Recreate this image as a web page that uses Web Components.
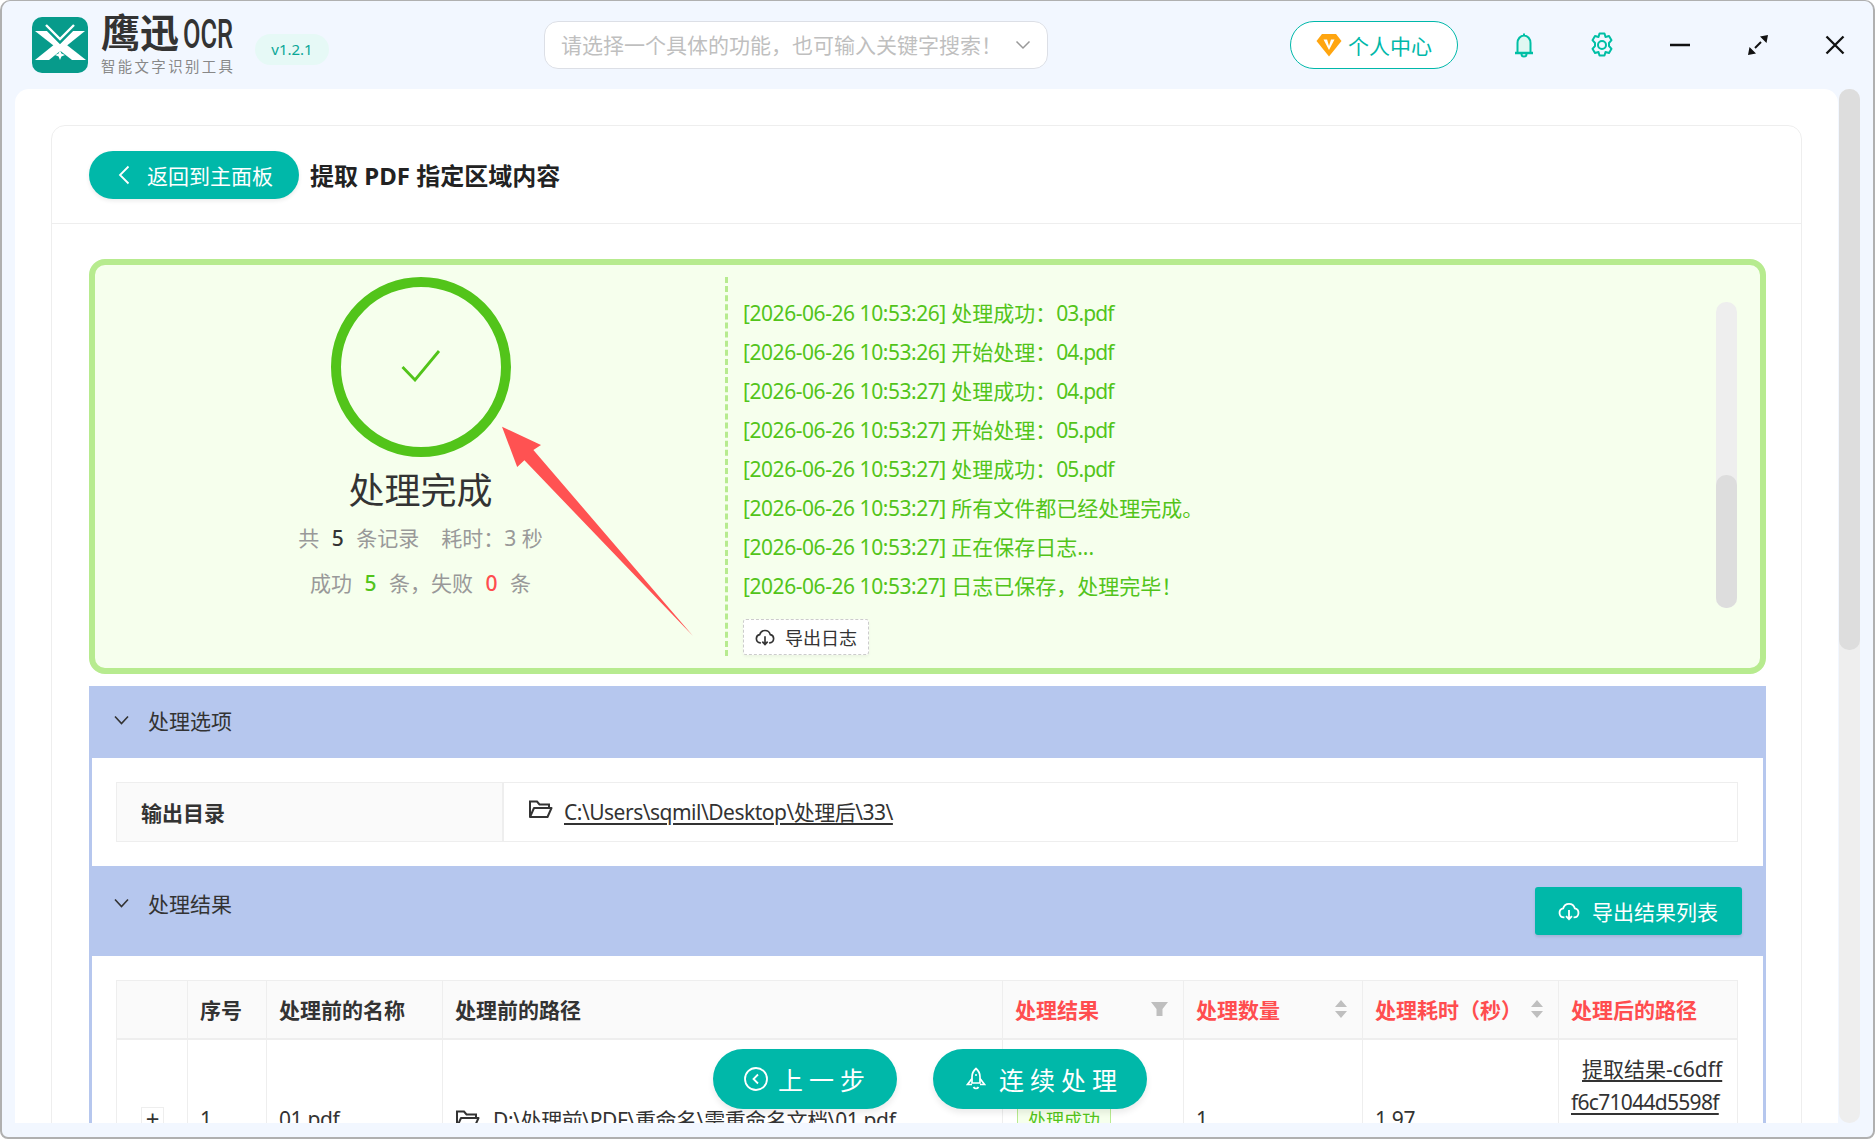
<!DOCTYPE html>
<html lang="zh-CN">
<head>
<meta charset="utf-8">
<title>鹰迅OCR</title>
<style>
    html, body { margin: 0; padding: 0; background: #fff; }
    body { font-family: "Noto Sans", "Noto Sans CJK SC", sans-serif; color: #333; overflow: hidden; }
    .tight { letter-spacing: -.45px; }
    .file { letter-spacing: -.9px; }
    .num { font-weight: 500; margin: 0 7px; }
</style>
</head>
<body>

<template id="app-window-template">
    <style>
        :host { display: block; position: relative; width: 1875px; height: 1139px; box-sizing: border-box; overflow: hidden;
            background: #f2f7ff; border: solid #b0b0b0; border-width: 1px 2px 2px 2px; border-radius: 10px 10px 8px 8px; }
        .body { display: flex; height: 1034px; padding-left: 13px; gap: 1px; }
        .panel { width: 1823px; background: #fff; border-radius: 14px 14px 0 0; overflow: hidden; box-sizing: border-box; padding: 36px 36px 0; }
        .track { width: 21px; background: #eee; border-radius: 10px; position: relative; }
        .thumb { height: 561px; background: #ddd; border-radius: 10px; }
    </style>
    <slot name="header"></slot>
    <div class="body">
        <div class="panel"><slot></slot></div>
        <div class="track"><div class="thumb"></div></div>
    </div>
    <slot name="float"></slot>
</template>

<template id="app-header-template">
    <style>
        :host { display: flex; align-items: center; height: 88px; }
        .logo { margin-left: 30px; width: 56px; height: 56px; display: block; }
        .brand { margin-left: 13px; width: 134px; font-family: "Liberation Sans", "Noto Sans CJK SC", sans-serif; }
        .name { display: flex; align-items: center; height: 38px; font-weight: 700; font-size: 39px; line-height: 38px; color: #333; white-space: nowrap; }
        .ocr { display: inline-block; font-family: "Roboto", sans-serif; font-size: 41px; line-height: 38px; font-weight: 500; transform: scaleX(.62); transform-origin: 0 50%; margin-left: 4px; }
        .sub { font-size: 14.4px; line-height: 18px; letter-spacing: 2.4px; color: #888; white-space: nowrap; margin-top: 5px; }
        .ver { margin-left: 20px; width: 74px; height: 31px; line-height: 31px; text-align: center; border-radius: 16px; background: #e6f9f6; color: #0aa796; font-size: 15px; margin-top: 9px; }
        .search { margin-left: 215px; width: 504px; height: 48px; box-sizing: border-box; border: 1px solid #dcdfe6; border-radius: 14px; background: #fff;
            display: flex; align-items: center; padding: 0 16px 0 16px; color: #bfbfbf; font-size: 21px; white-space: nowrap; margin-top: -1px; }
        .search span { flex: 1; margin-top: -2px; }
        .vip { margin-left: 242px; width: 168px; height: 48px; box-sizing: border-box; border: 1.5px solid #00b8a9; border-radius: 24px; background: #fff;
            display: flex; align-items: center; padding-left: 25px; gap: 6px; color: #00b8a9; font-size: 21px; white-space: nowrap; margin-top: -1px; }
        .ic { display: block; flex: none; }
    </style>
    <svg class="logo" viewBox="0 0 56 56">
        <rect width="56" height="56" rx="10" fill="#079b8b"/>
        <path d="M3 14h14l37 29H40z" fill="#fff"/>
        <path d="M53 14H39L3 43h14z" fill="#fff"/>
        <path d="M14 9l14 14L42 9" stroke="#079b8b" stroke-width="6" fill="none"/>
        <path d="M14 8l14 14L42 8" stroke="#fff" stroke-width="2.4" fill="none"/>
        <path d="M28 33l1.4 3.6L33 38l-3.6 1.4L28 43l-1.4-3.6L23 38l3.6-1.4z" fill="#fff"/>
    </svg>
    <div class="brand">
        <div class="name">鹰迅<span class="ocr">OCR</span></div>
        <div class="sub">智能文字识别工具</div>
    </div>
    <div class="ver">v1.2.1</div>
    <div class="search">
        <span>请选择一个具体的功能，也可输入关键字搜索！</span>
        <svg class="ic" width="16" height="10" viewBox="0 0 16 10"><path d="M1.5 1.5 8 8l6.5-6.5" stroke="#999" stroke-width="1.5" fill="none"/></svg>
    </div>
    <div class="vip">
        <svg class="ic" width="26" height="24" viewBox="0 0 26 24"><path d="M6 1h14l5.500 7L13 23.500.5 8z" fill="#ffa50f"/><path d="M7.500 6.500h3.600L13 13l2-6.500h3.500L13 17z" fill="#fff"/></svg>
        <span>个人中心</span>
    </div>
    <svg class="ic" style="margin-left:56px" width="20" height="26" viewBox="0 0 20 26"><path d="M10 1.500v2M3.500 21V11c0-4 2.800-7.500 6.500-7.500s6.500 3.500 6.500 7.500v10z" fill="#e0f7f2" stroke="#00bfa5" stroke-width="2"/><path d="M1 21h18" stroke="#00bfa5" stroke-width="2.400"/><path d="M7.500 22a2.500 2.500 0 0 0 5 0" fill="none" stroke="#00bfa5" stroke-width="2"/></svg>
    <svg class="ic" style="margin-left:56px" width="24" height="26" viewBox="0 0 24 26"><path d="M9.500 1.500h5l1 3.500 3.500-1 2.500 4.200-2.500 2.800v3l2.500 2.800-2.500 4.200-3.500-1-1 3.500h-5l-1-3.500-3.500 1-2.500-4.200 2.500-2.800v-3L2.500 8.200 5 4l3.500 1z" fill="none" stroke="#00bfa5" stroke-width="2" stroke-linejoin="round"/><circle cx="12" cy="13" r="4" fill="none" stroke="#00bfa5" stroke-width="2"/></svg>
    <svg class="ic" style="margin-left:55px" width="22" height="4" viewBox="0 0 22 4"><path d="M1 2h20" stroke="#111" stroke-width="2.500"/></svg>
    <svg class="ic" style="margin-left:56px" width="22" height="22" viewBox="0 0 22 22"><path d="M8 14l6-6" stroke="#111" stroke-width="2"/><path d="M21 1l-8 1.500 6.500 6.500zM1 21l8-1.500L2.500 13z" fill="#111"/></svg>
    <svg class="ic" style="margin-left:56px" width="20" height="20" viewBox="0 0 20 20"><path d="M1.500 1.500l17 17M18.500 1.500l-17 17" stroke="#111" stroke-width="2.300"/></svg>
</template>

<template id="work-card-template">
    <style>
        :host { display: block; border: 1px solid #eee; border-radius: 14px; background: #fff; }
        .head { display: flex; align-items: center; height: 97px; padding-left: 37px; border-bottom: 1px solid #eee; }
        .back { display: flex; align-items: center; width: 210px; height: 48px; border-radius: 24px; background: #00b8a9; color: #fff; font-size: 21px; box-shadow: 0 2px 4px rgba(0,0,0,.08); box-sizing: border-box; padding-left: 29px; }
        .back svg { margin-right: 17px; }
        h1 { margin: 0 0 0 11px; font-size: 24px; font-weight: 700; color: #222; white-space: nowrap; }
        .content { padding: 35px 35px 0 37px; }
    </style>
    <div class="head">
        <div class="back"><svg width="12" height="20" viewBox="0 0 12 20"><path d="M10.500 1.500 2 10l8.500 8.500" stroke="#fff" stroke-width="1.800" fill="none"/></svg>返回到主面板</div>
        <h1><slot name="title"></slot></h1>
    </div>
    <div class="content"><slot></slot></div>
</template>

<template id="result-panel-template">
    <style>
        :host { display: block; position: relative; height: 415px; box-sizing: border-box; border: 6px solid #b7eb8f; border-radius: 16px; background: #f6ffed; }
        .wrap { display: flex; height: 403px; padding: 12px 0 0 21px; box-sizing: border-box; }
        .left { width: 609px; display: flex; flex-direction: column; align-items: center; }
        .ring { width: 180px; height: 180px; box-sizing: border-box; border: 10px solid #52c41a; border-radius: 50%; display: flex; align-items: center; justify-content: center; }
        .ring svg { display: block; margin: -2px 0 0 0; }
        .done { font-size: 36px; line-height: 44px; margin-top: 12px; color: #333; white-space: nowrap; }
        .stat { font-size: 21px; line-height: 45px; color: #999; white-space: pre; }
        .stat.first { margin-top: 3px; }
        .right { flex: 1; border-left: 3px dashed #b7eb8f; padding: 17px 0 0 15px; height: 379px; box-sizing: border-box; }
        .export { display: inline-flex; align-items: center; gap: 10px; height: 36px; width: 126px; box-sizing: border-box; margin-top: 13px; padding-left: 11px; border: 1px dashed #ccc; border-radius: 3px; background: #fff; font-size: 18px; color: #333; box-shadow: 0 2px 3px rgba(0,0,0,.04); }
        .bar { width: 21px; height: 306px; margin: 25px 23px 0 0; border-radius: 10px; background: #eee; display: flex; align-items: flex-end; }
        .bar i { display: block; width: 100%; height: 133px; border-radius: 10px; background: #ddd; }
        .arrow { position: absolute; left: -6px; top: -6px; width: 700px; height: 415px; pointer-events: none; }
    </style>
    <div class="wrap">
        <div class="left">
            <div class="ring"><svg width="40" height="32" viewBox="0 0 40 32"><path d="M1.500 17 14 30 38 1" stroke="#52c41a" stroke-width="2.800" fill="none"/></svg></div>
            <div class="done"><slot name="done"></slot></div>
            <div class="stat first"><slot name="total"></slot></div>
            <div class="stat"><slot name="counts"></slot></div>
        </div>
        <div class="right">
            <slot name="log"></slot>
            <div class="export">
                <cloud-icon color="#333" size="20"></cloud-icon>
                <span>导出日志</span>
            </div>
        </div>
        <div class="bar"><i></i></div>
    </div>
    <svg class="arrow" viewBox="0 0 700 415"><path d="M413 167.700 452 186 444.400 191 604 377 435.400 201.300 428.200 208z" fill="#ff5252"/></svg>
</template>

<template id="log-line-template">
    <style>
        :host { display: block; height: 39px; line-height: 39px; font-size: 21px; color: #52c41a; white-space: nowrap; }
    </style>
    <slot></slot>
</template>

<template id="cloud-icon-template">
    <style>
        :host { display: inline-block; line-height: 0; }
    </style>
    <svg viewBox="0 0 24 24" fill="none" stroke-width="2"><path d="M7 19H6.500a5 5 0 0 1-.8-9.900 6.500 6.500 0 0 1 12.600 0A5 5 0 0 1 17.500 19H17"/><path d="M12 11v10M8.800 17.500 12 21l3.200-3.500"/></svg>
</template>

<template id="folder-icon-template">
    <style>
        :host { display: inline-block; line-height: 0; }
    </style>
    <svg width="25" height="20" viewBox="0 0 25 20" fill="none" stroke="#333" stroke-width="2"><path d="M2 18V2.500h7l2.500 3h9.500v3.500"/><path d="M2 18 6 9h17.500l-4 9z" stroke-linejoin="round"/></svg>
</template>

<template id="fold-section-template">
    <style>
        :host { display: block; }
        .head { display: flex; justify-content: space-between; align-items: flex-start; background: #b6c7ee; height: var(--head-height, 72px); }
        .title { display: flex; align-items: center; height: 72px; padding-left: 25px; font-size: 21px; color: #333; margin-top: var(--title-shift, -2px); }
        .title svg { margin-right: 19px; }
        .body { border: solid #b6c7ee; border-width: 0 3px; background: #fff; padding: 24px 25px 24px 24px; }
    </style>
    <div class="head">
        <div class="title">
            <svg width="15" height="10" viewBox="0 0 15 10"><path d="M1 1.500 7.500 8.500 14 1.500" stroke="#333" stroke-width="1.600" fill="none"/></svg>
            <span><slot name="title"></slot></span>
        </div>
        <slot name="extra"></slot>
    </div>
    <div class="body"><slot></slot></div>
</template>

<template id="export-button-template">
    <style>
        :host { display: flex; align-items: center; width: 207px; height: 48px; box-sizing: border-box; margin: 21px 24px 0 0; padding-left: 23px; gap: 12px; background: #00b8a9; color: #fff; font-size: 21px; border-radius: 3px; box-shadow: 0 2px 3px rgba(0,0,0,.1); white-space: nowrap; }
    </style>
    <cloud-icon color="#fff" size="22"></cloud-icon>
    <slot></slot>
</template>

<template id="info-row-template">
    <style>
        :host { display: flex; height: 60px; box-sizing: border-box; border: 1px solid #eee; font-size: 21px; }
        .label { display: flex; align-items: center; width: 387px; padding-left: 24px; box-sizing: border-box; background: #fafafa; border-right: 2px solid #eee; font-weight: 700; color: #333; padding-bottom: 1px; }
        .value { display: flex; align-items: center; gap: 11px; padding: 0 0 2px 24px; color: #333; }
        folder-icon { margin-top: -4px; }
        u { text-underline-offset: 3px; letter-spacing: -.5px; }
    </style>
    <div class="label"><slot name="label"></slot></div>
    <div class="value"><folder-icon></folder-icon><u><slot></slot></u></div>
</template>

<template id="data-table-template">
    <style>
        :host { display: grid; grid-template-columns: 71px 79px 176px 560px 181px 179px 196px 179px; grid-template-rows: 59px 158px; border-top: 1px solid #eee; border-left: 1px solid #eee; box-sizing: border-box; font-size: 21px; }
    </style>
    <slot></slot>
</template>

<template id="head-cell-template">
    <style>
        :host { display: flex; align-items: center; justify-content: space-between; box-sizing: border-box; padding: 0 15px 2px 12px; background: #fafafa; border-right: 1px solid #eee; border-bottom: 2px solid #eee; font-weight: 700; color: #333; white-space: nowrap; }
        :host([red]) { color: #ff4d4f; }
    </style>
    <slot></slot><slot name="icon"></slot>
</template>

<template id="body-cell-template">
    <style>
        :host { display: flex; align-items: center; box-sizing: border-box; padding: 0 12px; border-right: 1px solid #eee; border-bottom: 1px solid #eee; color: #333; white-space: nowrap; letter-spacing: -.4px; }
    </style>
    <slot></slot>
</template>

<template id="float-actions-template">
    <style>
        :host { position: absolute; left: 711px; top: 1048px; display: flex; gap: 36px; }
        .btn { display: flex; align-items: center; height: 60px; box-sizing: border-box; border-radius: 30px; background: #00b8a9; color: #fff; font-size: 25px; letter-spacing: 6px; white-space: nowrap; box-shadow: 0 4px 6px rgba(0,0,0,.08); }
        .one { width: 184px; padding-left: 31px; gap: 10px; }
        .two { width: 214px; padding-left: 33px; gap: 13px; }
    </style>
    <div class="btn one">
        <svg width="24" height="24" viewBox="0 0 24 24" fill="none" stroke="#fff" stroke-width="1.800"><circle cx="12" cy="12" r="11"/><path d="M14 7.500 9.500 12l4.500 4.500"/></svg>
        <span>上一步</span>
    </div>
    <div class="btn two">
        <svg width="20" height="24" viewBox="0 0 20 24" fill="none" stroke="#fff" stroke-width="1.700"><path d="M10 1.500c3 2.500 4 5.500 4 8.500v6H6v-6c0-3 1-6 4-8.500z"/><path d="M6 11.500 1.500 17.500H6M14 11.500l4.500 6H14M7.500 20c1 2 4 2 5 0"/><circle cx="10" cy="8" r="1" fill="#fff" stroke="none"/></svg>
        <span>连续处理</span>
    </div>
</template>

<app-window>
    <app-header slot="header"></app-header>

    <work-card>
        <span slot="title">提取 PDF 指定区域内容</span>

        <result-panel>
            <span slot="done">处理完成</span>
            <span slot="total">共 <b class="num" style="color:#333">5</b> 条记录<span style="margin-left:22px">耗时：3 秒</span></span>
            <span slot="counts">成功 <b class="num" style="color:#52c41a">5</b> 条，失败 <b class="num" style="color:#ff4d4f">0</b> 条</span>
            <log-line slot="log"><span class="tight">[2026-06-26 10:53:26]</span> 处理成功：<span class="file">03.pdf</span></log-line>
            <log-line slot="log"><span class="tight">[2026-06-26 10:53:26]</span> 开始处理：<span class="file">04.pdf</span></log-line>
            <log-line slot="log"><span class="tight">[2026-06-26 10:53:27]</span> 处理成功：<span class="file">04.pdf</span></log-line>
            <log-line slot="log"><span class="tight">[2026-06-26 10:53:27]</span> 开始处理：<span class="file">05.pdf</span></log-line>
            <log-line slot="log"><span class="tight">[2026-06-26 10:53:27]</span> 处理成功：<span class="file">05.pdf</span></log-line>
            <log-line slot="log"><span class="tight">[2026-06-26 10:53:27]</span> 所有文件都已经处理完成。</log-line>
            <log-line slot="log"><span class="tight">[2026-06-26 10:53:27]</span> 正在保存日志...</log-line>
            <log-line slot="log"><span class="tight">[2026-06-26 10:53:27]</span> 日志已保存，处理完毕！</log-line>
        </result-panel>

        <fold-section style="margin-top:12px">
            <span slot="title">处理选项</span>
            <info-row>
                <span slot="label">输出目录</span>
                C:\Users\sqmil\Desktop\处理后\33\
            </info-row>
        </fold-section>

        <fold-section style="--head-height:90px;--title-shift:1px">
            <span slot="title">处理结果</span>
            <export-button slot="extra">导出结果列表</export-button>
            <data-table>
                <head-cell></head-cell>
                <head-cell>序号</head-cell>
                <head-cell>处理前的名称</head-cell>
                <head-cell>处理前的路径</head-cell>
                <head-cell red>处理结果
                    <svg slot="icon" width="17" height="14" viewBox="0 0 17 14"><path d="M0 0h17l-5.500 7v7h-6V7z" fill="#bfbfbf"/></svg>
                </head-cell>
                <head-cell red>处理数量
                    <svg slot="icon" width="12" height="18" viewBox="0 0 12 18"><path d="M6 0l6 7H0zM6 18l6-7H0z" fill="#bfbfbf"/></svg>
                </head-cell>
                <head-cell red>处理耗时（秒）
                    <svg slot="icon" width="12" height="18" viewBox="0 0 12 18"><path d="M6 0l6 7H0zM6 18l6-7H0z" fill="#bfbfbf"/></svg>
                </head-cell>
                <head-cell red>处理后的路径</head-cell>

                <body-cell style="padding-left:24px">
                    <span style="display:flex;align-items:center;justify-content:center;width:23px;height:23px;box-sizing:border-box;border:1px solid #eee;background:#fff;font-size:24px;line-height:1">+</span>
                </body-cell>
                <body-cell>1</body-cell>
                <body-cell>01.pdf</body-cell>
                <body-cell><folder-icon style="margin-right:13px"></folder-icon>D:\处理前\PDF\重命名\需重命名文档\01.pdf</body-cell>
                <body-cell><span style="display:inline-block;padding:0 10px;height:32px;line-height:30px;box-sizing:border-box;border:1px solid #b7eb8f;background:#f6ffed;color:#52c41a;font-size:18px;letter-spacing:0;margin:3px 0 0 2px">处理成功</span></body-cell>
                <body-cell>1</body-cell>
                <body-cell>1.97</body-cell>
                <body-cell style="align-items:flex-start;padding-top:13px;white-space:normal;letter-spacing:0">
                    <span style="line-height:33px;text-decoration:underline;text-underline-offset:3px"><span style="display:block;padding-left:11px">提取结果-c6dff</span><span style="display:block;letter-spacing:-.7px">f6c71044d5598f</span></span>
                </body-cell>
            </data-table>
        </fold-section>
    </work-card>

    <float-actions slot="float"></float-actions>
</app-window>

<script>
    // every element just clones its template into an open shadow root
    function define(name, templateId, extra) {
        customElements.define(name, class extends HTMLElement {
            constructor() {
                super();
                const template = document.querySelector('#' + templateId);
                const clone = document.importNode(template.content, true);
                const shadowRoot = this.attachShadow({ mode: 'open' });
                shadowRoot.appendChild(clone);
            }

            connectedCallback() {
                if (extra) extra(this);
            }
        });
    }

    define('cloud-icon', 'cloud-icon-template', el => {
        const svg = el.shadowRoot.querySelector('svg');
        const size = el.getAttribute('size') || '20';
        svg.setAttribute('width', size);
        svg.setAttribute('height', size);
        svg.setAttribute('stroke', el.getAttribute('color') || '#333');
    });
    define('folder-icon', 'folder-icon-template');
    define('log-line', 'log-line-template');
    define('app-window', 'app-window-template');
    define('app-header', 'app-header-template');
    define('work-card', 'work-card-template');
    define('result-panel', 'result-panel-template');
    define('fold-section', 'fold-section-template');
    define('export-button', 'export-button-template');
    define('info-row', 'info-row-template');
    define('data-table', 'data-table-template');
    define('head-cell', 'head-cell-template');
    define('body-cell', 'body-cell-template');
    define('float-actions', 'float-actions-template');
</script>
</body>
</html>
